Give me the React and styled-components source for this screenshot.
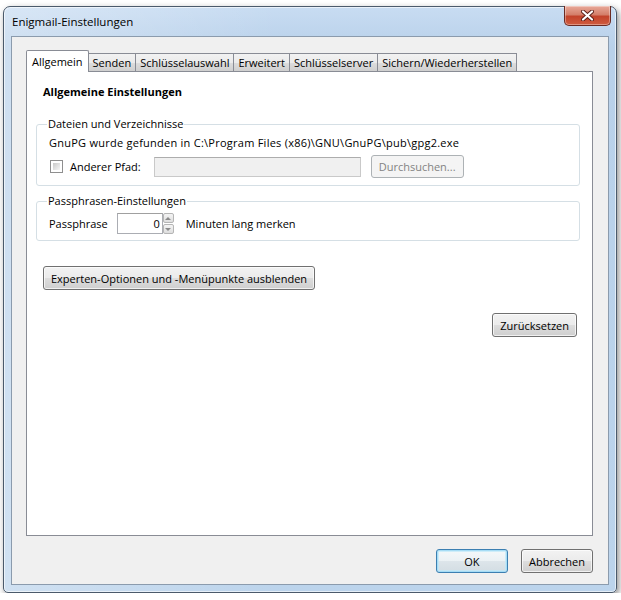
import React from "react";
import styled, { createGlobalStyle, css } from "styled-components";

const GlobalStyle = createGlobalStyle`
  html, body { margin: 0; padding: 0; background: #fff; }
  body {
    font-family: "Open Sans", "Segoe UI", sans-serif;
    font-size: 11px;
    color: #000;
  }
  * { box-sizing: border-box; }
`;

const Window = styled.div`
  margin: 6px 0 0 3px;
  width: 614px;
  height: 587px;
  display: flex;
  flex-direction: column;
  border: 1px solid #4b5a6b;
  border-radius: 7px 7px 5px 5px;
  background:
    linear-gradient(to right, rgba(255,255,255,0.3), rgba(255,255,255,0) 45%),
    linear-gradient(#c8dcf2, #b9d1ea 40px, #bcd4ec);
  box-shadow: inset 0 0 0 1px rgba(255,255,255,0.6), 2px 3px 7px rgba(0,0,0,0.45);
`;

const TitleBar = styled.div`
  height: 29px;
  display: flex;
  align-items: flex-start;
  justify-content: space-between;
  padding: 0 5px 0 8px;
`;

const Title = styled.span`
  font-size: 11.5px;
  line-height: 16px;
  margin-top: 7px;
  color: #000;
`;

const CloseButton = styled.button`
  width: 47px;
  height: 20px;
  margin-top: -1px;
  padding: 0;
  display: flex;
  align-items: center;
  justify-content: center;
  border: 1px solid #6b2a22;
  border-top: none;
  border-radius: 0 0 5px 5px;
  background: linear-gradient(#e9a99a 0%, #d47f6a 45%, #c3432b 55%, #cf5c3f 100%);
  box-shadow: inset 0 0 0 1px rgba(255,255,255,0.35);
`;

const Client = styled.div`
  flex: 1;
  margin: 0 7px 7px;
  border: 1px solid #8b9bad;
  background: #f0f0f0;
  padding: 13px 15px 11px 14px;
  display: flex;
  flex-direction: column;
`;

const TabStrip = styled.div`
  height: 22px;
  display: flex;
  align-items: flex-start;
  position: relative;
  z-index: 1;
`;

const Tab = styled.div`
  display: flex;
  align-items: center;
  padding: 0 4px;
  border: 1px solid #898c95;
  border-bottom: none;
  white-space: nowrap;
  & + & { margin-left: -1px; }
  ${p => p.$active
    ? css`
        height: 22px;
        padding: 0 5px;
        background: #fff;
        position: relative;
        z-index: 2;
        border-radius: 2px 2px 0 0;
      `
    : css`
        height: 18px;
        margin-top: 3px;
        background: linear-gradient(#f2f2f2 0%, #ebebeb 50%, #dddddd 51%, #cfcfcf 100%);
      `}
`;

const Panel = styled.div`
  flex: 1;
  margin-top: -1px;
  background: #fff;
  border: 1px solid #898c95;
  padding: 12px 12px 0 9px;
  display: flex;
  flex-direction: column;
  align-items: flex-start;
`;

const Heading = styled.div`
  margin-left: 7px;
  font-weight: 700;
  line-height: 16px;
`;

const Group = styled.fieldset`
  align-self: stretch;
  min-width: 0;
  margin: ${p => p.$top}px 0 0;
  border: 1px solid #d5dfe5;
  border-radius: 3px;
  padding: ${p => p.$pad};
`;

const Legend = styled.legend`
  padding: 0 1px;
  margin-left: -2px;
  line-height: 16px;
`;

const PathLine = styled.div`
  line-height: 16px;
  letter-spacing: 0.25px;
  white-space: nowrap;
`;

const Row = styled.div`
  display: flex;
  align-items: center;
  height: ${p => p.$h}px;
  margin-top: ${p => p.$top || 0}px;
`;

const Checkbox = styled.span`
  width: 13px;
  height: 13px;
  margin-left: 1px;
  border: 1px solid #8f8f8f;
  padding: 2px;
  background: linear-gradient(135deg, #c9c9c9, #f7f7f7) content-box, #fff;
  flex: none;
`;

const Label = styled.span`
  margin-left: ${p => p.$left || 0}px;
  white-space: nowrap;
`;

const TextField = styled.div`
  width: 207px;
  height: 20px;
  margin-left: 13px;
  border: 1px solid #c9c9c9;
  border-top-color: #adadad;
  background: #f0f0f0;
`;

const Button = styled.button`
  font: inherit;
  color: #000;
  height: ${p => p.$h || 24}px;
  min-width: 72px;
  padding: 0 7px;
  margin: ${p => p.$margin || 0};
  border: 1px solid #707070;
  border-radius: 3px;
  background: linear-gradient(#f2f2f2 0%, #ebebeb 50%, #dddddd 51%, #cfcfcf 100%);
  box-shadow: inset 0 0 0 1px rgba(255,255,255,0.7);
  white-space: nowrap;
  ${p => p.disabled && css`
    border-color: #adb2b5;
    background: #f4f4f4;
    color: #838383;
    box-shadow: none;
  `}
  ${p => p.$default && css`
    border-color: #3c7fb1;
    background: linear-gradient(#f4f8fa 0%, #ebf1f4 50%, #dde5ea 51%, #d3dde3 100%);
    box-shadow: inset 0 0 0 1px #a6dcf5, inset 0 0 0 2px rgba(190,232,250,0.7);
  `}
`;

const Spin = styled.div`
  display: flex;
  height: 21px;
  margin-left: 9px;
`;

const SpinField = styled.div`
  width: 46px;
  border: 1px solid #abadb3;
  border-top-color: #a0a0a0;
  background: #fff;
  text-align: right;
  padding: 0 2px;
  line-height: 19px;
`;

const SpinArrows = styled.div`
  width: 11px;
  display: flex;
  flex-direction: column;
  gap: 1px;
`;

const Arrow = styled.span`
  flex: 1;
  display: flex;
  align-items: center;
  justify-content: center;
  border: 1px solid #b5b5b5;
  border-radius: 2px;
  background: linear-gradient(#f4f4f4, #dedede);
  &::after {
    content: "";
    border-left: 3px solid transparent;
    border-right: 3px solid transparent;
    ${p => p.$down
      ? css`border-top: 3px solid #8a8a8a;`
      : css`border-bottom: 3px solid #8a8a8a;`}
  }
`;

const Footer = styled.div`
  display: flex;
  justify-content: flex-end;
  gap: 13px;
  margin-top: 13px;
`;

const tabs = [
  "Allgemein",
  "Senden",
  "Schlüsselauswahl",
  "Erweitert",
  "Schlüsselserver",
  "Sichern/Wiederherstellen",
];

export default function App() {
  return (
    <>
      <GlobalStyle />
      <Window>
        <TitleBar>
          <Title>Enigmail-Einstellungen</Title>
          <CloseButton aria-label="Schließen">
            <svg width="13" height="11" viewBox="0 0 13 11">
              <path d="M2 1.5 L11 9.5 M11 1.5 L2 9.5" stroke="#5a1d16" strokeWidth="4" strokeLinecap="round" />
              <path d="M2 1.5 L11 9.5 M11 1.5 L2 9.5" stroke="#fff" strokeWidth="2.2" strokeLinecap="round" />
            </svg>
          </CloseButton>
        </TitleBar>

        <Client>
          <TabStrip>
            {tabs.map((t, i) => (
              <Tab key={t} $active={i === 0}>{t}</Tab>
            ))}
          </TabStrip>

          <Panel>
            <Heading>Allgemeine Einstellungen</Heading>

            <Group $top={16} $pad="3px 12px 7px">
              <Legend>Dateien und Verzeichnisse</Legend>
              <PathLine>GnuPG wurde gefunden in C:\Program Files (x86)\GNU\GnuPG\pub\gpg2.exe</PathLine>
              <Row $h={23} $top={4}>
                <Checkbox />
                <Label $left={7}>Anderer Pfad:</Label>
                <TextField />
                <Button disabled $h={23} $margin="0 0 0 10px">Durchsuchen...</Button>
              </Row>
            </Group>

            <Group $top={7} $pad="4px 12px 6px">
              <Legend>Passphrasen-Einstellungen</Legend>
              <Row $h={21}>
                <Label>Passphrase</Label>
                <Spin>
                  <SpinField>0</SpinField>
                  <SpinArrows>
                    <Arrow />
                    <Arrow $down />
                  </SpinArrows>
                </Spin>
                <Label $left={12}>Minuten lang merken</Label>
              </Row>
            </Group>

            <Button $margin="25px 0 0 7px">Experten-Optionen und -Menüpunkte ausblenden</Button>
            <Button $margin="23px 3px 0 0" style={{ alignSelf: "flex-end" }}>Zurücksetzen</Button>
          </Panel>

          <Footer>
            <Button $default>OK</Button>
            <Button>Abbrechen</Button>
          </Footer>
        </Client>
      </Window>
    </>
  );
}
